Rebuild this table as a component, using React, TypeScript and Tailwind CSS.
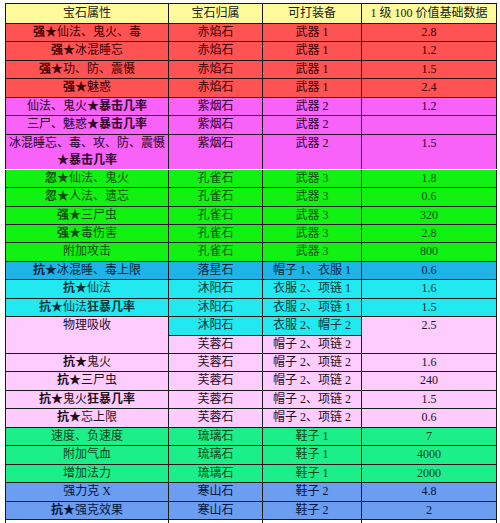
import React from 'react'

type Tone = 'red' | 'purple' | 'green' | 'sky' | 'cyan' | 'pink' | 'mint' | 'blue' | 'white'

const TONES: Record<Tone, string> = {
  red:    'bg-[#ff5252] text-[#3a0000]',
  purple: 'bg-[#f862f8] text-[#2a002a]',
  green:  'bg-[#12f212] text-[#0a500a]',
  sky:    'bg-[#1eb4e8] text-[#002838]',
  cyan:   'bg-[#22e8f0] text-[#00343a]',
  pink:   'bg-[#ffccff] text-[#1e0e1e]',
  mint:   'bg-[#1cef8a] text-[#064418]',
  blue:   'bg-[#6b9df0] text-[#00163e]',
  white:  'bg-white text-black',
}

// "**x**" marks bold segments
function Rich({ text }: { text: string }) {
  const parts = text.split('**')
  return (
    <>
      {parts.map((p, i) =>
        i % 2 === 1 ? <b key={i} className="font-bold">{p}</b> : <span key={i}>{p}</span>
      )}
    </>
  )
}

type Row = { tone: Tone; attr: string; stone: string; gear: string; val: string }

const ROWS: Row[] = [
  { tone: 'red',    attr: '**强★**仙法、鬼火、毒',   stone: '赤焰石', gear: '武器 1', val: '2.8' },
  { tone: 'red',    attr: '**强★**冰混睡忘',         stone: '赤焰石', gear: '武器 1', val: '1.2' },
  { tone: 'red',    attr: '**强★**功、防、震慑',     stone: '赤焰石', gear: '武器 1', val: '1.5' },
  { tone: 'red',    attr: '**强★**魅惑',             stone: '赤焰石', gear: '武器 1', val: '2.4' },
  { tone: 'purple', attr: '仙法、鬼火**★暴击几率**', stone: '紫烟石', gear: '武器 2', val: '1.2' },
  { tone: 'purple', attr: '三尸、魅惑**★暴击几率**', stone: '紫烟石', gear: '武器 2', val: '' },
]

const ROWS_GREEN: Row[] = [
  { tone: 'green', attr: '**忽★**仙法、鬼火', stone: '孔雀石', gear: '武器 3', val: '1.8' },
  { tone: 'green', attr: '**忽★**人法、遗忘', stone: '孔雀石', gear: '武器 3', val: '0.6' },
  { tone: 'green', attr: '**强★**三尸虫',     stone: '孔雀石', gear: '武器 3', val: '320' },
  { tone: 'green', attr: '**强★**毒伤害',     stone: '孔雀石', gear: '武器 3', val: '2.8' },
  { tone: 'green', attr: '附加攻击',           stone: '孔雀石', gear: '武器 3', val: '800' },
  { tone: 'sky',   attr: '**抗★**冰混睡、毒上限',     stone: '落星石', gear: '帽子 1、衣服 1', val: '0.6' },
  { tone: 'cyan',  attr: '**抗★**仙法',               stone: '沐阳石', gear: '衣服 2、项链 1', val: '1.6' },
  { tone: 'cyan',  attr: '**抗★**仙法**狂暴几率**',   stone: '沐阳石', gear: '衣服 2、项链 1', val: '1.5' },
]

const ROWS_TAIL: Row[] = [
  { tone: 'pink', attr: '**抗★**鬼火',             stone: '芙蓉石', gear: '帽子 2、项链 2', val: '1.6' },
  { tone: 'pink', attr: '**抗★**三尸虫',           stone: '芙蓉石', gear: '帽子 2、项链 2', val: '240' },
  { tone: 'pink', attr: '**抗★**鬼火**狂暴几率**', stone: '芙蓉石', gear: '帽子 2、项链 2', val: '1.5' },
  { tone: 'pink', attr: '**抗★**忘上限',           stone: '芙蓉石', gear: '帽子 2、项链 2', val: '0.6' },
  { tone: 'mint', attr: '速度、负速度', stone: '琉璃石', gear: '鞋子 1', val: '7' },
  { tone: 'mint', attr: '附加气血',     stone: '琉璃石', gear: '鞋子 1', val: '4000' },
  { tone: 'mint', attr: '增加法力',     stone: '琉璃石', gear: '鞋子 1', val: '2000' },
  { tone: 'blue', attr: '强力克 X',         stone: '寒山石', gear: '鞋子 2', val: '4.8' },
  { tone: 'blue', attr: '**抗★**强克效果', stone: '寒山石', gear: '鞋子 2', val: '2' },
]

const td = 'border border-[#1a1a1a] p-0 align-top text-center leading-[17px]'

function Line({ r }: { r: Row }) {
  const c = TONES[r.tone]
  return (
    <tr className="h-[18.45px]">
      <td className={`${td} ${c}`}><Rich text={r.attr} /></td>
      <td className={`${td} ${c}`}>{r.stone}</td>
      <td className={`${td} ${c}`}>{r.gear}</td>
      <td className={`${td} ${c}`}>{r.val}</td>
    </tr>
  )
}

export default function App() {
  return (
    <div className="w-[500px] h-[523px] overflow-hidden bg-white pl-[5px] pt-[3px]"
      style={{ fontFamily: '"Liberation Serif", "Noto Sans CJK SC", serif' }}>
      <table className="table-fixed border-collapse w-[491px] text-[12px]">
        <colgroup>
          <col className="w-[163px]" />
          <col className="w-[94px]" />
          <col className="w-[99px]" />
          <col className="w-[135px]" />
        </colgroup>
        <tbody>
          <tr className="h-[20px]">
            {['宝石属性', '宝石归属', '可打装备', '1 级 100 价值基础数据'].map(h => (
              <td key={h} className={`${td} bg-[#fffa9c] text-[#1a1a1a] leading-[18px]`}>{h}</td>
            ))}
          </tr>

          {ROWS.map((r, i) => <Line key={i} r={r} />)}

          {/* two-line row */}
          <tr className="h-[35px]">
            <td className={`${td} ${TONES.purple} border-b-white`}>
              冰混睡忘、毒、攻、防、震慑<br /><b className="font-bold">★暴击几率</b>
            </td>
            <td className={`${td} ${TONES.purple} border-b-white`}>紫烟石</td>
            <td className={`${td} ${TONES.purple} border-b-white`}>武器 2</td>
            <td className={`${td} ${TONES.purple} border-b-white`}>1.5</td>
          </tr>

          {ROWS_GREEN.map((r, i) => <Line key={i} r={r} />)}

          {/* split row: 物理吸收 / 2.5 span two lines */}
          <tr className="h-[18.45px]">
            <td rowSpan={2} className={`${td} ${TONES.pink}`}>物理吸收</td>
            <td className={`${td} ${TONES.cyan}`}>沐阳石</td>
            <td className={`${td} ${TONES.cyan}`}>衣服 2、帽子 2</td>
            <td rowSpan={2} className={`${td} ${TONES.pink}`}>2.5</td>
          </tr>
          <tr className="h-[18.45px]">
            <td className={`${td} ${TONES.pink}`}>芙蓉石</td>
            <td className={`${td} ${TONES.pink}`}>帽子 2、项链 2</td>
          </tr>

          {ROWS_TAIL.map((r, i) => <Line key={i} r={r} />)}

          <Line r={{ tone: 'white', attr: '', stone: '', gear: '', val: '' }} />
        </tbody>
      </table>
    </div>
  )
}
